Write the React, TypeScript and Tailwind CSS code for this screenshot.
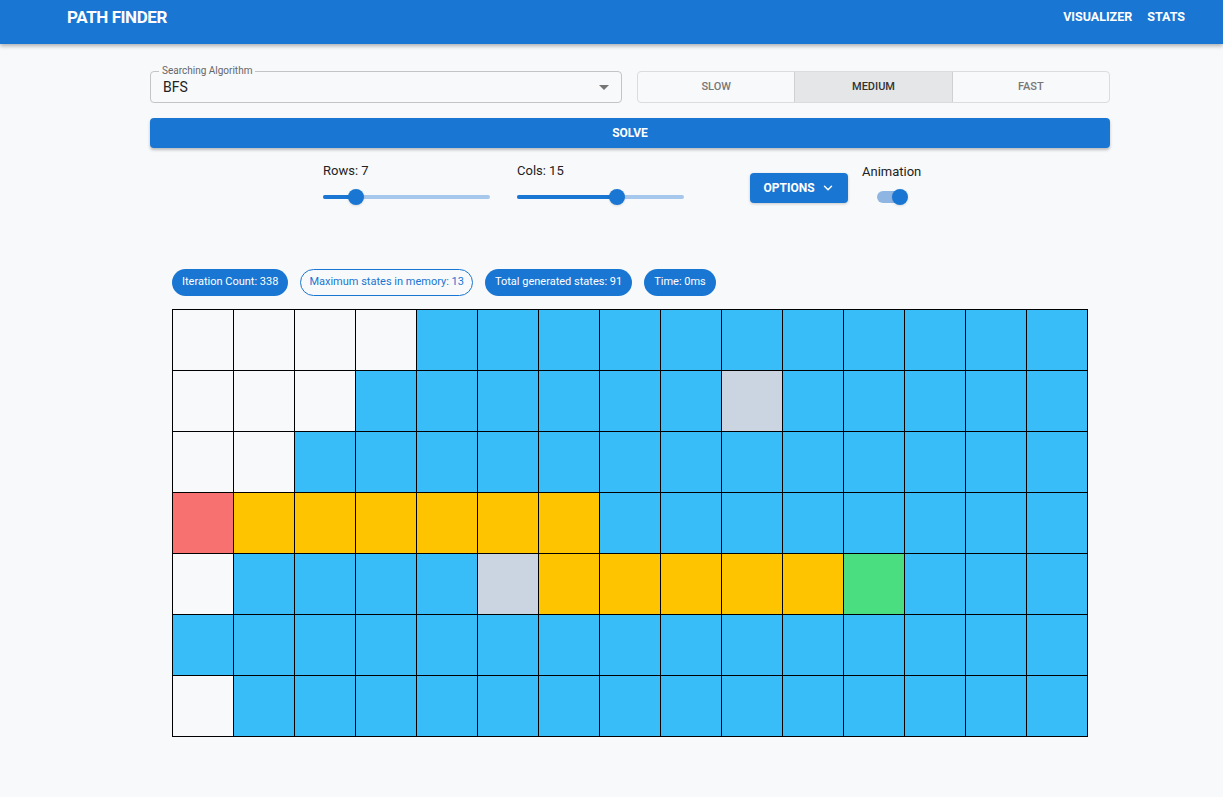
import { ChevronDown } from "lucide-react"

const W = "bg-[#f8f9fb]"
const B = "bg-[#38bdf8]"
const Y = "bg-[#ffc400]"
const R = "bg-[#f87171]"
const G = "bg-[#4ade80]"
const S = "bg-[#cbd5e1]"

const layout = [
  "WWWWBBBBBBBBBBB",
  "WWWBBBBBBSBBBBB",
  "WWBBBBBBBBBBBBB",
  "RYYYYYYBBBBBBBB",
  "WBBBBSYYYYYGBBB",
  "BBBBBBBBBBBBBBB",
  "WBBBBBBBBBBBBBB",
]

const colorOf: Record<string, string> = { W, B, Y, R, G, S }

function Slider({ label, pct }: { label: string; pct: number }) {
  return (
    <div className="w-[167px]">
      <div className="text-[13px] text-[#222] leading-none">{label}</div>
      <div className="relative h-[20px] mt-[10px]">
        <div className="absolute left-0 right-0 top-[8px] h-[4px] rounded-full bg-[#a6c8ec]" />
        <div className="absolute left-0 top-[8px] h-[4px] rounded-l-full bg-[#1976d2]" style={{ width: `${pct}%` }} />
        <div
          className="absolute top-[2px] w-[16px] h-[16px] -ml-[8px] rounded-full bg-[#1976d2] shadow"
          style={{ left: `${pct}%` }}
        />
      </div>
    </div>
  )
}

export default function App() {
  const stats = [
    { text: "Iteration Count: 338", outlined: false },
    { text: "Maximum states in memory: 13", outlined: true },
    { text: "Total generated states: 91", outlined: false },
    { text: "Time: 0ms", outlined: false },
  ]

  return (
    <div className={`min-h-[797px] ${W} font-['Roboto',sans-serif]`}>
      <header className="h-[44px] bg-[#1976d2] shadow-[0_2px_4px_rgba(0,0,0,0.3)] flex items-start justify-between pt-[6px] pl-[67px] pr-[38px]">
        <div className="text-white font-bold text-[17px] leading-[22px] tracking-tight">PATH FINDER</div>
        <nav className="flex gap-[15px] text-white font-bold text-[12.5px] leading-[22px]">
          <span>VISUALIZER</span>
          <span>STATS</span>
        </nav>
      </header>

      <div className="ml-[150px] w-[960px] pt-[27px]">
        <div className="flex gap-[15px]">
          <div className="relative w-[472px] h-[32px] border border-[#c4c4c4] rounded flex items-center px-[12px]">
            <span className={`absolute -top-[7px] left-[8px] px-[3px] ${W} text-[10px] leading-[12px] text-[#666]`}>
              Searching Algorithm
            </span>
            <span className="text-[14px] text-[#222] flex-1">BFS</span>
            <span className="w-0 h-0 border-l-[5px] border-r-[5px] border-t-[5px] border-l-transparent border-r-transparent border-t-[#757575]" />
          </div>
          <div className="w-[473px] h-[32px] flex border border-[#dcdcdc] rounded overflow-hidden text-[11px] font-medium">
            <div className="flex-1 flex items-center justify-center text-[#777]">SLOW</div>
            <div className="flex-1 flex items-center justify-center bg-[#e5e6e8] text-[#333] border-x border-[#d0d0d0]">MEDIUM</div>
            <div className="flex-1 flex items-center justify-center text-[#777]">FAST</div>
          </div>
        </div>

        <button className="mt-[15px] w-full h-[30px] bg-[#1976d2] rounded text-white text-[12px] font-bold shadow-[0_2px_3px_rgba(0,0,0,0.25)]">
          SOLVE
        </button>

        <div className="flex items-start mt-[16px] ml-[173px]">
          <Slider label="Rows: 7" pct={20} />
          <div className="ml-[27px]">
            <Slider label="Cols: 15" pct={60} />
          </div>
          <button className="ml-[66px] mt-[9px] h-[30px] w-[98px] bg-[#1976d2] rounded text-white text-[12px] font-bold flex items-center justify-center gap-[6px] shadow-[0_1px_3px_rgba(0,0,0,0.2)]">
            OPTIONS <ChevronDown size={14} strokeWidth={2.5} />
          </button>
          <div className="ml-[14px] flex flex-col items-center">
            <div className="text-[13px] text-[#222] leading-none mt-[1px]">Animation</div>
            <div className="relative w-[30px] h-[20px] mt-[9px]">
              <div className="absolute left-0 w-[28px] top-[4px] h-[12px] rounded-full bg-[#8fb6e2]" />
              <div className="absolute left-[15px] top-[2px] w-[16px] h-[16px] rounded-full bg-[#1976d2] shadow" />
            </div>
          </div>
        </div>

        <div className="mx-[22px] mt-[62px]">
          <div className="flex gap-[12px] mb-[13px]">
            {stats.map((s) => (
              <span
                key={s.text}
                className={
                  s.outlined
                    ? "h-[27px] px-[8px] rounded-full border border-[#1976d2] text-[#1976d2] text-[11px] flex items-center"
                    : "h-[27px] px-[10px] rounded-full bg-[#1976d2] text-white text-[11px] flex items-center"
                }
              >
                {s.text}
              </span>
            ))}
          </div>

          <div className="inline-grid grid-cols-[repeat(15,60px)] gap-px bg-black border border-black">
            {layout.flatMap((row, r) =>
              row.split("").map((c, i) => <div key={`${r}-${i}`} className={`h-[60px] ${colorOf[c]}`} />)
            )}
          </div>
        </div>
      </div>
    </div>
  )
}
